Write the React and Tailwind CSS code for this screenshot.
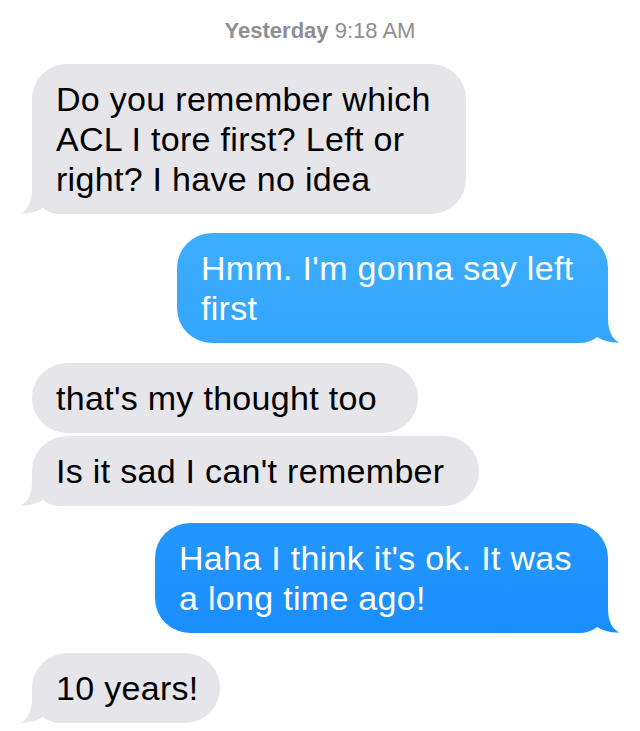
import React from "react";

const blue = "bg-fixed bg-[linear-gradient(to_bottom,#52c1fb,#1186ff)]";

function Received({ children, tail = true, className = "" }) {
  return (
    <div className={`relative self-start ml-[32px] rounded-[35px] bg-[#e5e5ea] pl-[24px] py-[15px] text-black whitespace-nowrap ${className}`}>
      {tail && (
        <div className="absolute bottom-0 left-[-12px] w-[50px] h-[36px] bg-[#e5e5ea] [clip-path:path('M12_0_L12_11_C12_24_8_32_0.5_35.5_C8_36_16_34_23_30_C28_34_34_36_42_36_L50_36_L50_0_Z')]" />
      )}
      <span className="relative">{children}</span>
    </div>
  );
}

function Sent({ children, className = "" }) {
  return (
    <div className={`relative self-end mr-[32px] rounded-[35px] ${blue} pl-[24px] py-[15px] text-white whitespace-nowrap ${className}`}>
      <div className={`absolute bottom-0 right-[-12px] w-[50px] h-[36px] ${blue} [clip-path:path('M38_0_L38_11_C38_24_42_32_49.5_35.5_C42_36_34_34_27_30_C22_34_16_36_8_36_L0_36_L0_0_Z')]`} />
      <span className="relative">{children}</span>
    </div>
  );
}

export default function App() {
  return (
    <div className="w-[640px] h-[731px] overflow-hidden bg-white font-['Liberation_Sans',Arial,sans-serif]">
      <div className="flex flex-col text-[34px] leading-[40px] tracking-[0.3px]">
        <div className="pt-[18px] h-[64px] text-center text-[22px] leading-[26px] tracking-normal text-[#8e8e93]">
          <span className="font-bold">Yesterday</span> 9:18 AM
        </div>
        <Received className="w-[434px]">
          Do you remember which
          <br />
          ACL I tore first? Left or
          <br />
          right? I have no idea
        </Received>
        <Sent className="mt-[19px] w-[431px]">
          Hmm. I'm gonna say left
          <br />
          first
        </Sent>
        <Received tail={false} className="mt-[20px] w-[386px]">
          that's my thought too
        </Received>
        <Received className="mt-[3px] w-[447px]">Is it sad I can't remember</Received>
        <Sent className="mt-[17px] w-[453px]">
          Haha I think it's ok. It was
          <br />
          a long time ago!
        </Sent>
        <Received className="mt-[20px] w-[188px]">10 years!</Received>
      </div>
    </div>
  );
}
